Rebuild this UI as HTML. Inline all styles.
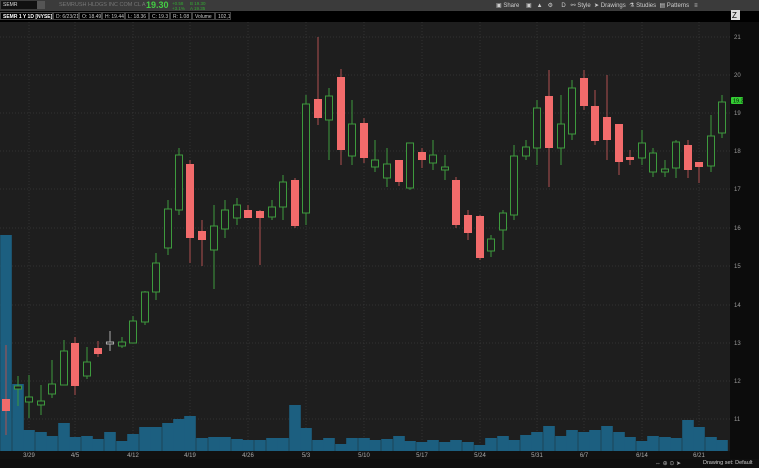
<!DOCTYPE html>
<html><head><meta charset="utf-8"><style>
body{margin:0;width:759px;height:468px;overflow:hidden;background:#1e1e1e;font-family:"Liberation Sans",sans-serif;}
#top{position:absolute;left:0;top:0;width:759px;height:11px;background:#3b3b3b;color:#999;font-size:6px;white-space:nowrap}
#bar2{position:absolute;left:0;top:11px;width:759px;height:11px;background:#000;color:#ccc;font-size:5px;white-space:nowrap}
.bx{position:absolute;top:1px;height:8px;border:1px solid #444;line-height:8px;box-sizing:border-box;padding-left:2px;overflow:hidden}
#ax{position:absolute;left:730px;top:22px;width:29px;height:446px;background:#0c0c0c;}
#bot{position:absolute;left:0;top:459px;width:759px;height:9px;background:#0f0f0f;color:#ccc;font-size:6px;white-space:nowrap}
svg{position:absolute;left:0;top:0}
</style></head><body>
<div id="top">
<div style="position:absolute;left:1px;top:1px;width:35px;height:8px;background:#111;color:#ddd;line-height:8px;padding-left:2px;font-size:5px">SEMR</div>
<div style="position:absolute;left:37px;top:1px;width:8px;height:8px;background:#555"></div>
<div style="position:absolute;left:59px;top:2px;color:#777;font-size:5.5px">SEMRUSH HLDGS INC COM CL A</div>
<div style="position:absolute;left:146px;top:0px;color:#4c4;font-size:9px;font-weight:bold">19.30</div>
<div style="position:absolute;left:172px;top:1px;color:#3a3;font-size:4.5px">+0.58<br>+3.1%</div>
<div style="position:absolute;left:190px;top:1px;color:#3a3;font-size:4.5px">B 19.30<br>A 19.35</div>
<div style="position:absolute;left:496px;top:2px;color:#ccc">▣ Share &nbsp;&nbsp;&nbsp;▣ &nbsp;&nbsp;▲ &nbsp;&nbsp;⚙ &nbsp;&nbsp;&nbsp;&nbsp;D &nbsp;&nbsp;⚯ Style &nbsp;➤ Drawings &nbsp;⚗ Studies &nbsp;▤ Patterns &nbsp;&nbsp;≡</div>
</div>
<div id="bar2">
<div class="bx" style="left:0;width:53px;font-weight:bold;color:#fff">SEMR 1 Y 1D [NYSE]</div>
<div class="bx" style="left:53px;width:26px">D: 6/23/21</div>
<div class="bx" style="left:79px;width:23px">O: 18.49</div>
<div class="bx" style="left:102px;width:23px">H: 19.44</div>
<div class="bx" style="left:125px;width:24px">L: 18.36</div>
<div class="bx" style="left:149px;width:21px">C: 19.3</div>
<div class="bx" style="left:170px;width:22px">R: 1.08</div>
<div class="bx" style="left:192px;width:23px">Volume</div>
<div class="bx" style="left:215px;width:16px">102,164</div>
</div>
<div id="ax"></div>
<div id="bot"><div style="position:absolute;left:655px;top:1px;color:#aaa">⇔ ⊕ ⊙ ➤</div><div style="position:absolute;left:703px;top:1px;font-size:5.5px">Drawing set: Default</div></div>
<svg id="s" width="759" height="468"></svg>
<script>
var C=[[6,'r',345,399,411,435],[18,'g',376,386,389,406],[29,'g',375,397,402,418],[41,'g',385,401,405,415],[52,'g',360,384,394,398],[64,'g',340,351,385,385],[75,'r',337,343,386,395],[87,'g',347,362,376,379],[98,'r',341,348,354,357],[110,'d',331,342,344,351],[122,'g',337,342,346,348],[133,'g',316,321,343,343],[145,'g',291,292,322,325],[156,'g',253,263,292,300],[168,'g',200,209,248,255],[179,'g',148,155,210,215],[190,'r',160,164,238,263],[202,'r',220,231,240,266],[214,'g',205,226,250,289],[225,'g',200,210,229,238],[237,'g',198,205,218,225],[248,'r',205,210,218,218],[260,'r',210,211,218,265],[272,'g',200,207,217,220],[283,'g',175,182,207,220],[295,'r',178,180,226,228],[306,'g',95,104,213,225],[318,'r',37,99,118,125],[329,'g',88,96,120,160],[341,'r',69,77,150,165],[352,'g',100,124,156,165],[364,'r',118,123,158,163],[375,'g',140,160,167,172],[387,'g',148,164,178,187],[399,'r',160,160,182,186],[410,'g',143,143,188,190],[422,'r',148,152,160,168],[433,'g',140,155,163,170],[445,'g',155,167,170,180],[456,'r',177,180,225,228],[468,'r',210,215,233,240],[480,'r',215,216,258,260],[491,'g',235,239,251,257],[503,'g',210,213,230,250],[514,'g',145,156,215,220],[526,'g',140,147,156,160],[537,'g',100,108,148,165],[549,'r',70,96,148,187],[561,'g',95,124,148,165],[572,'g',80,88,134,140],[584,'r',70,78,106,110],[595,'r',90,106,141,145],[607,'r',75,117,140,160],[619,'r',124,124,162,175],[630,'r',150,157,160,165],[642,'g',130,143,158,165],[653,'g',148,153,172,177],[665,'g',160,169,172,177],[676,'g',140,142,168,178],[688,'r',140,145,170,178],[699,'r',162,162,167,183],[711,'g',115,136,166,172],[722,'g',95,102,133,138]];
var V=[235,384,430,432,436,423,437,436,439,432,441,434,427,427,423,419,416,438,437,437,439,440,440,438,438,405,428,440,438,444,438,438,440,439,436,441,442,440,442,440,442,445,438,436,440,435,432,426,436,430,432,430,426,432,437,441,436,437,438,420,427,437,440];
var h='';
var P=[[21,37],[20,75],[19,113],[18,151],[17,189],[16,228],[15,266],[14,305],[13,343],[12,381],[11,419]];
P.forEach(function(p){h+='<line x1="0" x2="730" y1="'+p[1]+'" y2="'+p[1]+'" stroke="#333" stroke-dasharray="1,2"/><text x="734" y="'+(p[1]+2)+'" fill="#999" font-size="6">'+p[0]+'</text>';});
var L=[['3/29',29],['4/5',75],['4/12',133],['4/19',190],['4/26',248],['5/3',306],['5/10',364],['5/17',422],['5/24',480],['5/31',537],['6/7',584],['6/14',642],['6/21',699]];
L.forEach(function(l){h+='<line x1="'+l[1]+'" x2="'+l[1]+'" y1="22" y2="450" stroke="#333" stroke-dasharray="1,2"/>';});
V.forEach(function(t,i){var x=C[i][0]-5.8;h+='<rect x="'+x+'" y="'+t+'" width="11.6" height="'+(451-t)+'" fill="#1c5f80"/>';});
C.forEach(function(c){var x=c[0],col=c[1]=='r'?'#f26b6b':(c[1]=='d'?'#aaa':'#3d9a3d');
h+='<line x1="'+x+'" x2="'+x+'" y1="'+c[2]+'" y2="'+c[5]+'" stroke="'+(c[1]=='r'?'#b05050':col)+'" stroke-width="1"/>';
var bh=Math.max(c[4]-c[3],1.5);
if(c[1]=='r')h+='<rect x="'+(x-4)+'" y="'+c[3]+'" width="8" height="'+bh+'" fill="#f26b6b"/>';
else h+='<rect x="'+(x-3.5)+'" y="'+c[3]+'" width="7" height="'+bh+'" fill="#1e1e1e" stroke="'+col+'" stroke-width="1"/>';});
h+='<rect x="731" y="97" width="12" height="7" rx="1" fill="#3c3"/><text x="733" y="102.5" font-size="5.5" fill="#000">19.3</text>';
h+='<rect x="0" y="451" width="730" height="8" fill="#111"/>';
L.forEach(function(l){h+='<text x="'+l[1]+'" y="457" fill="#aaa" font-size="6" text-anchor="middle">'+l[0]+'</text>';});
h+='<rect x="731" y="10" width="9" height="10" fill="#ddd"/><text x="732" y="18" font-size="8" fill="#000">Z</text>';
document.getElementById('s').innerHTML=h;
</script>
</body></html>
